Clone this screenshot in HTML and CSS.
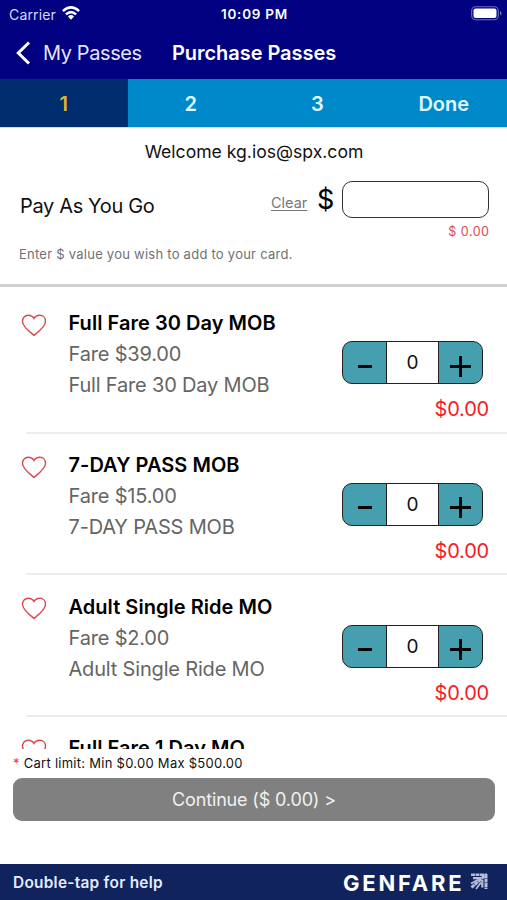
FILE: index.html
```html
<!DOCTYPE html>
<html lang="en">
<head>
<meta charset="utf-8">
<title>Purchase Passes</title>
<link rel="stylesheet" href="styles.css">
</head>
<body>
<svg class="symbols" aria-hidden="true">
  <symbol id="heart" viewBox="0 0 26 23"><path d="M13 21.4C8.6 17.8 1.5 12.8 1.5 7.3C1.5 3.8 3.9 1.2 7.1 1.2C9.8 1.2 12 2.5 13 4.5C14 2.5 16.2 1.2 18.9 1.2C22.1 1.2 24.5 3.8 24.5 7.3C24.5 12.8 17.4 17.8 13 21.4Z" fill="none" stroke="#d94a50" stroke-width="1.4"/></symbol>
</svg>
<div class="app">
  <header class="top">
    <div class="status">
      <span class="carrier">Carrier</span>
      <svg class="wifi" viewBox="0 0 18 14"><g fill="none" stroke="#fff" stroke-width="2.5"><path d="M.9 5.1Q9-2.3 17.1 5.1"/><path d="M3.9 8.4Q9 3.8 14.1 8.4"/></g><path d="M5.9 10.4Q9 7.8 12.1 10.4L9 13.7Z" fill="#fff"/></svg>
      <span class="time">10:09 PM</span>
      <svg class="battery" viewBox="0 0 31 15"><rect x=".7" y=".7" width="26.6" height="13" rx="4" fill="none" stroke="#6f6fc0" stroke-width="1.1"/><rect x="2.5" y="2.5" width="23" height="9.5" rx="2" fill="#fff"/><path d="M29 5v4.4Q30.5 8.6 30.5 7.2T29 5Z" fill="#7777c4"/></svg>
    </div>
    <nav class="nav">
      <svg class="back" viewBox="0 0 15 24"><path d="M13 1.5L2.3 12L13 22.5" fill="none" stroke="#fff" stroke-width="3"/></svg>
      <span class="parent">My Passes</span>
      <h1>Purchase Passes</h1>
    </nav>
  </header>
  <div class="steps"><span class="step active">1</span><span class="step">2</span><span class="step">3</span><span class="step">Done</span></div>
  <section class="payg">
    <p class="welcome">Welcome kg.ios@spx.com</p>
    <div class="entry">
      <span class="label">Pay As You Go</span>
      <a class="clear">Clear</a>
      <span class="dollar">$</span>
      <span class="field"></span>
    </div>
    <p class="amount">$ 0.00</p>
    <p class="hint">Enter $ value you wish to add to your card.</p>
  </section>
  <main class="list">
    <article class="pass">
      <svg class="heart"><use href="#heart"/></svg>
      <div class="info"><h2>Full Fare 30 Day MOB</h2><p>Fare $39.00</p><p>Full Fare 30 Day MOB</p></div>
      <div class="buy"><div class="stepper"><b><i class="minus"></i></b><span>0</span><b><i class="plus"></i></b></div><p class="total">$0.00</p></div>
    </article>
    <article class="pass">
      <svg class="heart"><use href="#heart"/></svg>
      <div class="info"><h2>7-DAY PASS MOB</h2><p>Fare $15.00</p><p>7-DAY PASS MOB</p></div>
      <div class="buy"><div class="stepper"><b><i class="minus"></i></b><span>0</span><b><i class="plus"></i></b></div><p class="total">$0.00</p></div>
    </article>
    <article class="pass">
      <svg class="heart"><use href="#heart"/></svg>
      <div class="info"><h2>Adult Single Ride MO</h2><p>Fare $2.00</p><p>Adult Single Ride MO</p></div>
      <div class="buy"><div class="stepper"><b><i class="minus"></i></b><span>0</span><b><i class="plus"></i></b></div><p class="total">$0.00</p></div>
    </article>
    <article class="pass">
      <svg class="heart"><use href="#heart"/></svg>
      <div class="info"><h2>Full Fare 1 Day MO</h2></div>
    </article>
  </main>
  <section class="cart">
    <p class="limit"><em>*</em> Cart limit: Min $0.00 Max $500.00</p>
    <div class="continue">Continue ($ 0.00) &gt;</div>
  </section>
  <footer class="foot">
    <span class="help">Double-tap for help</span>
    <span class="brand">GENFARE</span>
    <svg class="mark" viewBox="0 0 18 17"><g fill="none" stroke="#b4bdd8"><path d="M1 1.7H17" stroke-width="2.4" stroke-dasharray="4 .5"/><path d="M16 1V16" stroke-width="3" stroke-dasharray="4 .5"/><path d="M3 5.2H11M12.3 7V14.5" stroke-width="2.2"/><path d="M14.5 3L1.5 14.5" stroke-width="3" stroke-dasharray="4 .5"/><path d="M8.5 6.5L1 10.5M11 9.5L6 16" stroke-width="1.8"/></g></svg>
  </footer>
</div>
</body>
</html>
```
FILE: styles.css
```css
* { box-sizing: border-box; margin: 0; padding: 0; }
body { background: #fff; color: #111; font-family: Inter, "Liberation Sans", sans-serif; overflow: hidden; }
.symbols { display: none; }
svg { display: block; flex: none; }
.app { width: 507px; height: 900px; display: flex; flex-direction: column; overflow: hidden; white-space: nowrap; }
.top { height: 79px; background: #000080; color: #fff; flex: none; }
.status { height: 28px; display: flex; align-items: center; padding: 0 5px 0 9px; font-size: 14px; }
.carrier { width: 53px; color: #d9d9f2; letter-spacing: .15px; }
.wifi { width: 18px; height: 14px; margin-top: -2px; }
.time { font-weight: 600; font-size: 13.5px; letter-spacing: .75px; margin-left: 141px; flex: 1; }
.battery { width: 31px; height: 15px; margin-top: -2px; }
.nav { height: 49px; display: flex; align-items: center; padding-left: 16px; }
.back { width: 15px; height: 24px; }
.parent { width: 129px; margin-left: 12px; font-size: 20px; color: #e4e4f8; letter-spacing: -.4px; }
h1 { font-size: 20px; font-weight: 600; letter-spacing: -.05px; }
.steps { height: 49px; flex: none; display: grid; grid-template-columns: 127.5px repeat(3, 1fr); background: #0089ca; color: #e2faff; font-size: 20px; font-weight: 600; line-height: 50px; text-align: center; overflow: hidden; border-bottom: 1px solid #c5e0f0; }
.active { background: #002d6d; color: #dfb32d; }
.payg { height: 159px; flex: none; border-bottom: 3px solid #d0d0d0; padding: 0 18px 0 19px; }
.welcome { height: 52px; line-height: 47px; font-size: 17.6px; text-align: center; }
.entry { height: 38px; display: flex; align-items: center; }
.label { width: 251px; font-size: 20px; padding: 14px 0 0 1px; letter-spacing: -.35px; }
.clear { width: 47px; font-size: 14.5px; color: #777; text-decoration: underline; text-underline-offset: 2px; padding: 7px 0 0 1px; }
.dollar { width: 25px; font-size: 27px; color: #000; }
.field { width: 147px; height: 37px; border: 1.5px solid #333; border-radius: 10px; }
.amount { height: 25px; line-height: 27px; text-align: right; color: #df4850; font-size: 12.5px; letter-spacing: .5px; margin-right: -.5px; }
.hint { line-height: 22px; font-size: 13px; color: #717171; letter-spacing: .25px; }
.list { height: 462px; flex: none; overflow: hidden; padding-top: 5px; }
.pass { height: 141.7px; margin-left: 26px; display: flex; border-bottom: 2px solid #ededed; }
.heart { width: 26px; height: 23px; margin: 22px 0 0 -5px; }
.info { width: 295px; padding: 16.2px 0 0 21.5px; }
h2, .info p { font-size: 20px; line-height: 31px; }
h2 { color: #000; font-weight: 600; letter-spacing: .04px; }
.info p { color: #656565; letter-spacing: -.18px; }
.buy { width: 147px; padding-top: 49.3px; }
.stepper { width: 141px; height: 43px; display: grid; grid-template-columns: 43px 1fr 43px; border: 1.5px solid #222; border-radius: 10px; overflow: hidden; background: #469fae; }
.stepper span { border: solid #222; border-width: 0 1.5px; background: #fff; text-align: center; font-size: 19px; line-height: 42px; }
.stepper b { display: flex; align-items: center; justify-content: center; padding-top: 6px; }
.minus { width: 14px; height: 3px; background: #050505; }
.plus { width: 21px; height: 21px; background: linear-gradient(#050505, #050505) center / 21px 3px no-repeat, linear-gradient(#050505, #050505) center / 3px 21px no-repeat; }
.total { color: #f51c22; font-size: 20px; letter-spacing: -.2px; line-height: 50px; text-align: right; }
.cart { height: 115px; flex: none; padding: 0 13px; }
.limit { height: 29px; line-height: 29px; font-size: 13px; letter-spacing: .27px; }
.limit em { color: #ee3b2f; font-style: normal; }
.continue { width: 482px; height: 43px; border-radius: 9px; background: #808080; color: #f1f1f1; font-size: 18px; letter-spacing: -.15px; line-height: 44px; text-align: center; }
.foot { height: 37px; flex: none; display: flex; align-items: center; padding-left: 13px; background: #10235c; color: #e3edff; }
.help { width: 330px; font-size: 15.4px; font-weight: 600; letter-spacing: .27px; }
.brand { width: 127px; font-size: 22px; font-weight: 700; color: #fff; letter-spacing: 2.8px; }
.mark { width: 18px; height: 17px; margin-top: -2px; }
```
